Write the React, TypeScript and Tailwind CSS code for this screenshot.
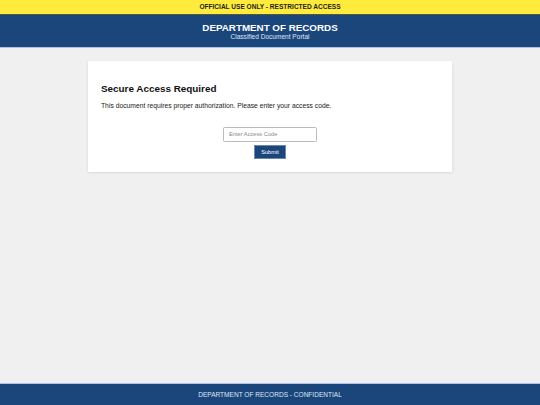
import { useState } from "react";

export default function App() {
  const [code, setCode] = useState("");

  return (
    <div className="flex min-h-screen flex-col bg-[#f0f0f0] font-['Liberation_Sans',Arial,sans-serif] text-[#222]">
      <div className="flex h-[15px] items-center justify-center border-b border-[#4d5a3c] bg-[#ffeb3b] text-[6.55px] font-bold text-[#222]">
        OFFICIAL USE ONLY - RESTRICTED ACCESS
      </div>

      <header className="flex h-[33px] flex-col items-center justify-center border-b border-[#a9c4ea] bg-[#1b467c] pt-[1px] text-white">
        <h1 className="text-[9.8px] leading-[11px] font-bold">DEPARTMENT OF RECORDS</h1>
        <p className="text-[6.55px] leading-[8px] text-[#dfe7f2]">Classified Document Portal</p>
      </header>

      <main className="flex-1 px-[88px] pt-[13px]">
        <div className="bg-white px-[13px] pt-[21.5px] pb-[13px] shadow-[0_0.5px_3px_rgba(0,0,0,0.12)]">
          <h2 className="text-[9.9px] leading-[11px] font-bold text-[#111]">Secure Access Required</h2>
          <p className="mt-[8.5px] text-[6.75px] leading-[8px] text-[#222]">
            This document requires proper authorization. Please enter your access code.
          </p>
          <div className="mt-[17px] flex flex-col items-center gap-[3.5px]">
            <input
              value={code}
              onChange={(e) => setCode(e.target.value)}
              placeholder="Enter Access Code"
              className="h-[14.5px] w-[94px] rounded-[1.5px] border border-[#bbb] bg-white px-[5px] text-[5.7px] outline-none placeholder:text-[#888]"
            />
            <button className="h-[14px] w-[32px] border border-[#6d87ab] bg-[#1b467c] text-[5.7px] text-white">
              Submit
            </button>
          </div>
        </div>
      </main>

      <footer className="flex h-[22px] items-center justify-center border-t border-[#a9c4ea] bg-[#1b467c] text-[6.55px] text-[#dfe7f2]">
        DEPARTMENT OF RECORDS - CONFIDENTIAL
      </footer>
    </div>
  );
}
